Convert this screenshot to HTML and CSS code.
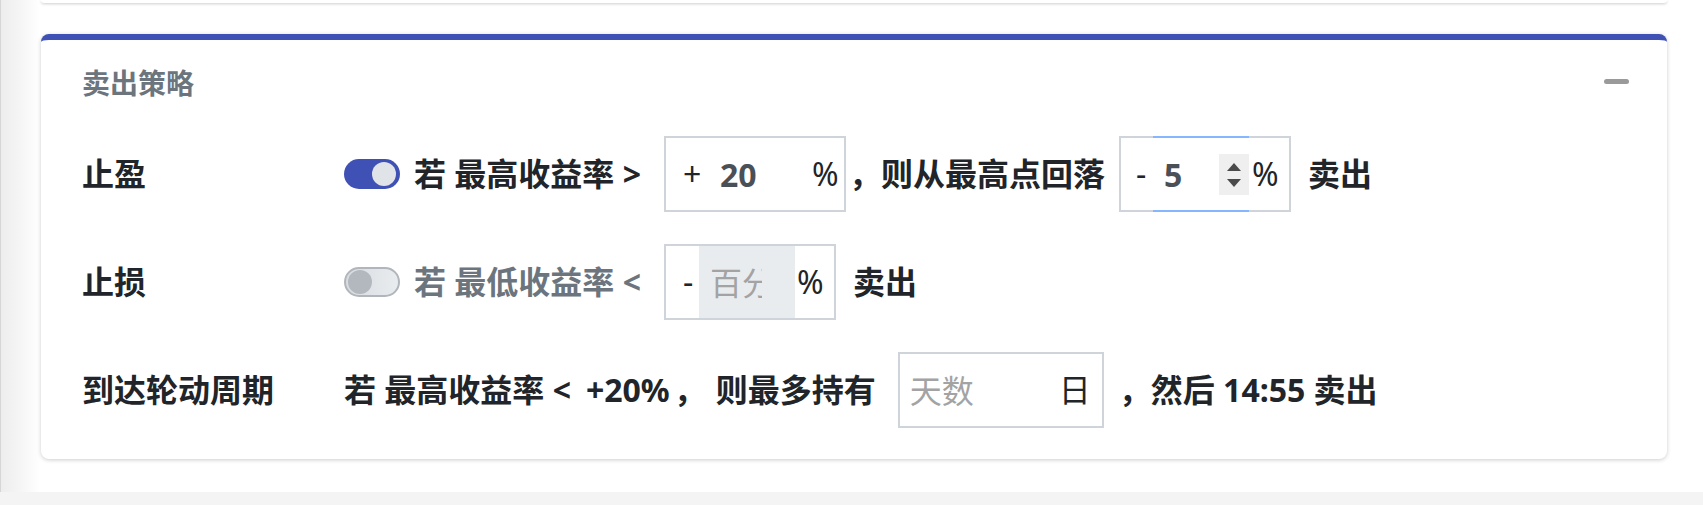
FILE: index.html
```html
<!DOCTYPE html>
<html lang="zh-CN">
<head>
<meta charset="utf-8">
<title>卖出策略</title>
<link rel="stylesheet" href="styles.css">
</head>
<body>
<div class="page">
  <div class="main">
    <div class="prev-card"></div>
    <section class="card">
      <header class="card-head">
        <h2 class="card-title">卖出策略</h2>
        <span class="collapse-icon"></span>
      </header>
      <div class="card-body">
        <div class="rule">
          <div class="rule-label">止盈</div>
          <div class="rule-content">
            <span class="switch switch-on"><span class="knob"></span></span>
            <span class="txt after-switch">若 最高收益率 &gt;</span>
            <div class="ig ig-1">
              <span class="ig-pre">+</span>
              <input class="ig-input" type="text" value="20">
              <span class="ig-suf">%</span>
            </div>
            <span class="txt after-box-comma">，则从最高点回落</span>
            <div class="ig ig-2">
              <span class="ig-pre">-</span>
              <div class="ig-focus">
                <input class="ig-input" type="text" value="5">
                <span class="spinner"><svg width="30" height="41" viewBox="0 0 30 41"><polygon points="8,17 22,17 15,9" fill="#4a4a4a"/><polygon points="8,25 22,25 15,33" fill="#4a4a4a"/></svg></span>
              </div>
              <span class="ig-suf">%</span>
            </div>
            <span class="txt after-box">卖出</span>
          </div>
        </div>
        <div class="rule">
          <div class="rule-label">止损</div>
          <div class="rule-content">
            <span class="switch switch-off"><span class="knob"></span></span>
            <span class="txt after-switch muted">若 最低收益率 &lt;</span>
            <div class="ig ig-3">
              <span class="ig-pre">-</span>
              <input class="ig-input" type="text" placeholder="百分比" disabled>
              <span class="ig-suf">%</span>
            </div>
            <span class="txt after-box">卖出</span>
          </div>
        </div>
        <div class="rule">
          <div class="rule-label">到达轮动周期</div>
          <div class="rule-content">
            <span class="txt">若 最高收益率 &lt;</span>
            <span class="txt seg-pct">+20%</span>
            <span class="txt seg-comma">，</span>
            <span class="txt seg-then">则最多持有</span>
            <div class="ig ig-4">
              <input class="ig-input" type="text" placeholder="天数">
              <span class="ig-suf">日</span>
            </div>
            <span class="txt after-box-comma2">，然后 14:55 卖出</span>
          </div>
        </div>
      </div>
    </section>
  </div>
  <div class="footer-band"></div>
</div>
</body>
</html>
```

FILE: styles.css
```css
* { box-sizing: border-box; }
html, body { margin: 0; padding: 0; }
body {
  width: 1703px;
  height: 505px;
  overflow: hidden;
  background: #fff;
  color: #212529;
  font-family: "Noto Sans", "Noto Sans CJK SC", sans-serif;
}
.page {
  display: flex;
  flex-direction: column;
  height: 505px;
  background: linear-gradient(90deg, #d6d6d6 0, #d6d6d6 1px, #ededed 1px, #f6f6f6 22px, #ffffff 40px);
}
.main {
  flex: 1;
  padding: 0 36px 0 41px;
}
.prev-card {
  height: 3px;
  background: #fff;
  border-radius: 0 0 8px 8px;
  box-shadow: 0 1px 3px rgba(0, 0, 0, 0.2);
}
.card {
  margin-top: 31px;
  background: #fff;
  border-top: 6px solid #3f51b5;
  border-radius: 8px;
  box-shadow: 0 1px 4px rgba(0, 0, 0, 0.2);
}
.card-head {
  display: flex;
  align-items: center;
  justify-content: space-between;
  padding: 24px 38px 0 41px;
}
.card-title {
  margin: 0;
  font-size: 28px;
  line-height: 38px;
  font-weight: 700;
  color: #6c757d;
}
.collapse-icon {
  width: 25px;
  height: 5px;
  border-radius: 3px;
  background: #9a9a9a;
  margin-bottom: 3px;
}
.card-body {
  display: flex;
  flex-direction: column;
  gap: 32px;
  padding: 34px 38px 31px 41px;
}
.rule {
  display: flex;
  align-items: center;
  height: 76px;
  font-size: 32px;
  line-height: 40px;
  font-weight: 700;
}
.rule-label {
  width: 262px;
  flex: none;
}
.rule-content {
  display: flex;
  align-items: center;
}
.txt { white-space: pre; }
.muted { color: #6c757d; }
.after-switch { margin-left: 14px; }
.after-box { margin-left: 17px; }
.after-box-comma { margin-left: 3px; margin-right: 14px; }
.after-box-comma2 { margin-left: 15px; }
.seg-pct { margin-left: 15px; }
.seg-comma { margin-left: 4px; }
.seg-then { margin-left: 10px; margin-right: 22px; }
.ig-1, .ig-3 { margin-left: 23px; }

/* switch */
.switch {
  position: relative;
  display: inline-block;
  width: 56px;
  height: 30px;
  border-radius: 15px;
  flex: none;
}
.switch .knob {
  position: absolute;
  top: 3px;
  width: 24px;
  height: 24px;
  border-radius: 50%;
}
.switch-on { background: #3f51b5; }
.switch-on .knob { right: 4px; background: #e0e3e8; }
.switch-off {
  background: linear-gradient(90deg, #d9dce0, #e9ecef);
  border: 2px solid #b1b6bc;
}
.switch-off .knob { left: 2px; top: 1px; background: #b3b8be; }

/* input groups */
.ig {
  display: flex;
  align-items: stretch;
  height: 76px;
  border: 2px solid #ced4da;
  background: #fff;
  font-weight: 400;
  flex: none;
}
.ig-pre, .ig-suf {
  display: flex;
  align-items: center;
  flex: none;
}
.ig-input {
  border: 0;
  outline: none;
  margin: 0;
  background: transparent;
  font-family: inherit;
  font-size: 32px;
  font-weight: 700;
  color: #495057;
  min-width: 0;
}
.ig-input::placeholder { color: #a3a3a3; font-weight: 400; opacity: 1; }
.ig-input:disabled { background: #e9ecef; }

.ig-1 .ig-pre { width: 46px; padding-left: 17px; }
.ig-1 .ig-input { width: 88px; padding-left: 8px; }
.ig-1 .ig-suf { width: 44px; padding-left: 12px; }

.ig-2 .ig-pre { width: 32px; padding-left: 15px; }
.ig-focus {
  display: flex;
  align-items: center;
  width: 96px;
  margin: -2px 0;
  border-top: 2px solid #86b7fe;
  border-bottom: 2px solid #86b7fe;
}
.ig-focus .ig-input { flex: 1; width: 0; padding-left: 11px; height: 100%; }
.spinner {
  display: block;
  width: 30px;
  height: 41px;
  background: #efefef;
  flex: none;
}
.spinner svg { display: block; }
.ig-2 .ig-suf { width: 40px; padding-left: 3px; }

.ig-3 .ig-pre { width: 33px; padding-left: 17px; }
.ig-3 .ig-input { width: 96px; padding: 0 33px 0 11px; }
.ig-3 .ig-suf { width: 39px; padding-left: 2px; }

.ig-4 .ig-input { width: 150px; padding-left: 10px; }
.ig-4 .ig-suf { width: 52px; padding-left: 9px; }

.footer-band {
  height: 13px;
  background: #f4f4f4;
  flex: none;
}
```
